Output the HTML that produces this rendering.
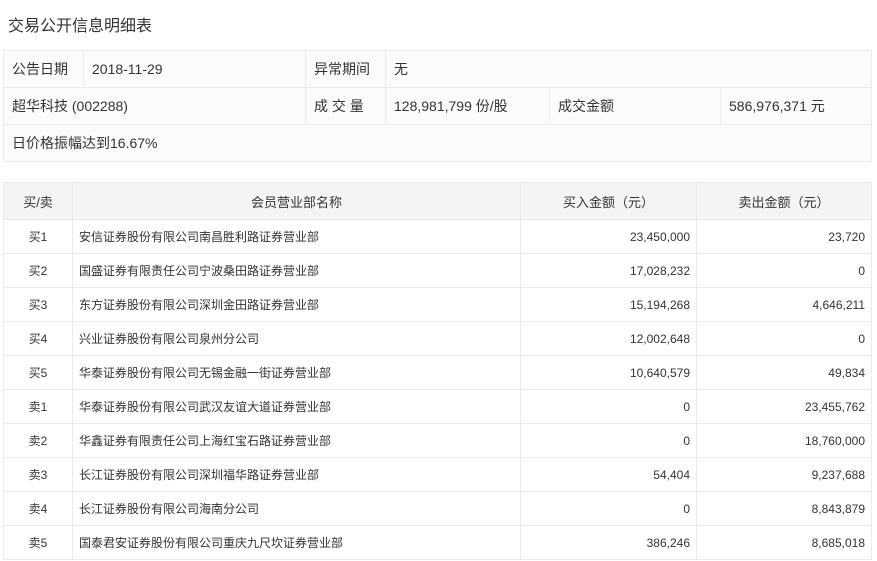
<!DOCTYPE html>
<html><head><meta charset="utf-8"><style>
*{margin:0;padding:0;box-sizing:border-box}
body{width:877px;height:561px;background:#fff;font-family:"Liberation Sans","Noto Sans CJK SC",sans-serif;color:#333;position:relative;overflow:hidden}
.t{position:absolute;left:8px;top:12px;font-size:16px;color:#333}
table{border-collapse:collapse;position:absolute;left:3px;table-layout:fixed}
td,th{border:1px solid #ebebeb;font-weight:normal}
#info{top:50px;width:868px;background:#fcfbf9;font-size:14px}
#info td{height:37px;padding-left:8px}
#main{top:182px;width:868px;font-size:12px}
#main th{height:37px;background:#f4f4f4;font-size:13px;text-align:center}
#main td{height:34px;padding:0 6px}
#main td.c{text-align:center}
#main td.r{text-align:right}
</style></head><body>
<div class="t">交易公开信息明细表</div>
<table id="info">
<colgroup><col style="width:80px"><col style="width:222px"><col style="width:80px"><col style="width:164px"><col style="width:171px"><col style="width:151px"></colgroup>
<tr><td>公告日期</td><td>2018-11-29</td><td>异常期间</td><td colspan="3">无</td></tr>
<tr><td colspan="2">超华科技 (002288)</td><td>成 交 量</td><td>128,981,799 份/股</td><td>成交金额</td><td>586,976,371 元</td></tr>
<tr><td colspan="6">日价格振幅达到16.67%</td></tr>
</table>
<table id="main">
<colgroup><col style="width:69px"><col style="width:448px"><col style="width:176px"><col style="width:175px"></colgroup>
<tr><th>买/卖</th><th>会员营业部名称</th><th>买入金额（元）</th><th>卖出金额（元）</th></tr>
<tr><td class="c">买1</td><td>安信证券股份有限公司南昌胜利路证券营业部</td><td class="r">23,450,000</td><td class="r">23,720</td></tr>
<tr><td class="c">买2</td><td>国盛证券有限责任公司宁波桑田路证券营业部</td><td class="r">17,028,232</td><td class="r">0</td></tr>
<tr><td class="c">买3</td><td>东方证券股份有限公司深圳金田路证券营业部</td><td class="r">15,194,268</td><td class="r">4,646,211</td></tr>
<tr><td class="c">买4</td><td>兴业证券股份有限公司泉州分公司</td><td class="r">12,002,648</td><td class="r">0</td></tr>
<tr><td class="c">买5</td><td>华泰证券股份有限公司无锡金融一街证券营业部</td><td class="r">10,640,579</td><td class="r">49,834</td></tr>
<tr><td class="c">卖1</td><td>华泰证券股份有限公司武汉友谊大道证券营业部</td><td class="r">0</td><td class="r">23,455,762</td></tr>
<tr><td class="c">卖2</td><td>华鑫证券有限责任公司上海红宝石路证券营业部</td><td class="r">0</td><td class="r">18,760,000</td></tr>
<tr><td class="c">卖3</td><td>长江证券股份有限公司深圳福华路证券营业部</td><td class="r">54,404</td><td class="r">9,237,688</td></tr>
<tr><td class="c">卖4</td><td>长江证券股份有限公司海南分公司</td><td class="r">0</td><td class="r">8,843,879</td></tr>
<tr><td class="c">卖5</td><td>国泰君安证券股份有限公司重庆九尺坎证券营业部</td><td class="r">386,246</td><td class="r">8,685,018</td></tr>
</table>
</body></html>
